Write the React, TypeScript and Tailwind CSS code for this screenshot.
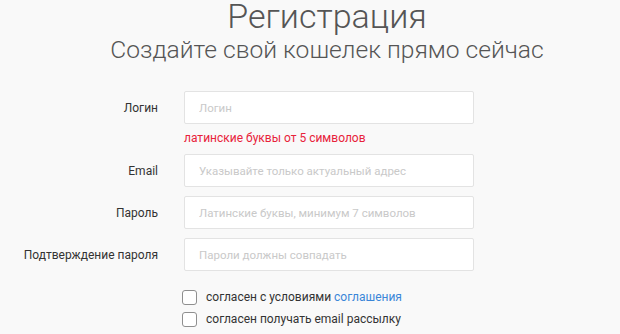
import React from "react";

const fields = [
  { label: "Логин", placeholder: "Логин" },
  { label: "Email", placeholder: "Указывайте только актуальный адрес" },
  { label: "Пароль", placeholder: "Латинские буквы, минимум 7 символов" },
  { label: "Подтверждение пароля", placeholder: "Пароли должны совпадать" },
];

function Field({ label, placeholder, hint }: { label: string; placeholder: string; hint?: string }) {
  return (
    <div className="flex flex-col">
      <div className="flex items-center">
        <label className="w-[158px] text-right text-[12px] leading-[16px] text-[#333]">{label}</label>
        <input
          className="ml-[26px] h-[33px] w-[290px] rounded-[2px] border border-[#e3e3e3] bg-white px-[14px] text-[11.5px] text-[#333] outline-none placeholder:text-[#c9c9c9]"
          placeholder={placeholder}
        />
      </div>
      {hint && <div className="ml-[184px] mt-[6px] text-[12px] leading-[16px] text-[#e8223a]">{hint}</div>}
    </div>
  );
}

function Check({ children }: { children: React.ReactNode }) {
  return (
    <label className="flex h-[18px] items-center">
      <span className="h-[15px] w-[15px] rounded-[3px] border-[1.5px] border-[#8f8f8f] bg-white" />
      <span className="ml-[9px] text-[12px] leading-[16px] text-[#333]">{children}</span>
    </label>
  );
}

export default function App() {
  return (
    <div
      className="h-[334px] w-[620px] overflow-hidden bg-[#f9f9f9]"
      style={{ fontFamily: "Roboto, 'Liberation Sans', sans-serif" }}
    >
      <div className="flex flex-col items-center pl-[34px]">
        <h1 className="text-[34px] font-light leading-[32px] text-[#555]">Регистрация</h1>
        <p className="mt-[2px] text-[24.6px] font-light leading-[32px] text-[#555]">Создайте свой кошелек прямо сейчас</p>
      </div>
      <div className="mt-[25px] flex flex-col">
        <Field {...fields[0]} hint="латинские буквы от 5 символов" />
        <div className="mt-[8px] flex flex-col gap-[9px]">
          <Field {...fields[1]} />
          <Field {...fields[2]} />
          <Field {...fields[3]} />
        </div>
        <div className="ml-[182px] mt-[17px] flex flex-col gap-[4px]">
          <Check>
            согласен с условиями <span className="text-[#3b86d8]">соглашения</span>
          </Check>
          <Check>согласен получать email рассылку</Check>
        </div>
      </div>
    </div>
  );
}
